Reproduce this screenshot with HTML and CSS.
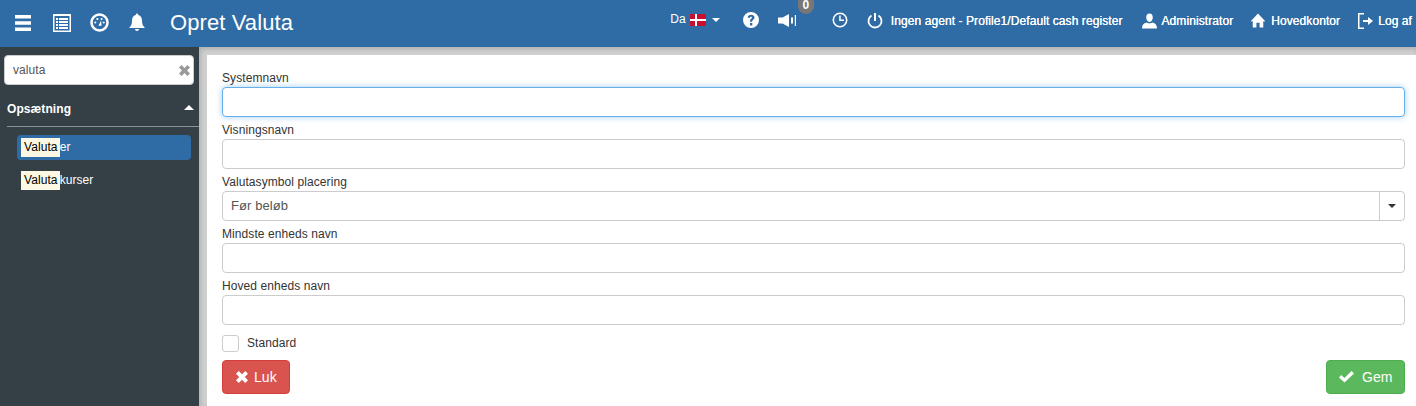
FILE: index.html
```html
<!DOCTYPE html>
<html lang="da">
<head>
<meta charset="utf-8">
<title>Opret Valuta</title>
<link rel="stylesheet" href="styles.css">
</head>
<body>
<header class="topbar">
  <div class="tools">
    <svg class="ic menu" viewBox="0 0 16 16"><path d="M0 0h16v3.500H0zM0 6.200h16v3.500H0zM0 12.500h16V16H0z"/></svg>
    <svg class="ic list" viewBox="0 0 18 18"><path fill-rule="evenodd" d="M0 0h18v18H0zM1.500 2v14.500h15V2z"/><path d="M3 4h2v2H3zM6 4h9v2H6zM3 7h2v2H3zM6 7h9v2H6zM3 10h2v2H3zM6 10h9v2H6zM3 13h2v2H3zM6 13h9v2H6z"/></svg>
    <svg class="ic gauge" viewBox="0 0 18 18"><circle cx="9" cy="9" r="7.600" fill="none" stroke="#fff" stroke-width="2.400"/><circle cx="5" cy="9" r="1"/><circle cx="7" cy="5.800" r="1"/><circle cx="13" cy="9" r="1"/><circle cx="11" cy="5.800" r="1"/><path d="M8 12l2.500-5 .5 5z"/></svg>
    <svg class="ic bell" viewBox="0 0 16 18"><path d="M8 0c.7 0 1 .5 1 1.200C12 2 13 4.500 13 7c0 4 1 5.500 3 7.500H0C2 12.500 3 11 3 7c0-2.500 1-5 4-5.800C7 .5 7.300 0 8 0zM6 15.500h4c0 1.200-1 2-2 2s-2-.8-2-2z"/></svg>
    <h1 class="title">Opret Valuta</h1>
  </div>
  <nav class="status">
    <span class="lang">Da
      <svg class="flag" viewBox="0 0 16 12"><rect width="16" height="12" fill="#c8102e"/><path d="M5 0h2v12H5zM0 5h16v2H0z" fill="#fff"/></svg>
      <i class="caret"></i>
    </span>
    <svg class="ic help" viewBox="0 0 16 16"><path fill-rule="evenodd" d="M8 0a8 8 0 1 1 0 16A8 8 0 0 1 8 0zM7 11v2.500h2.300V11zM8.100 2.800c-2 0-3.200 1-3.500 2.700l2.200.4c.1-.8.500-1.200 1.200-1.200.6 0 1 .4 1 .9 0 1.200-2.100 1.300-2.100 3.700v.4h2.300c-.1-2 2.300-1.900 2.300-4.200 0-1.700-1.400-2.700-3.400-2.700z"/></svg>
    <span class="sound">
      <svg class="ic speaker" viewBox="0 0 19 13"><path d="M0 3.500h4.500L11 0v13L4.500 9.500H0zM13 3.500h2v6h-2zM16.800 1H18v11h-1.200z"/></svg>
      <b class="badge">0</b>
    </span>
    <svg class="ic clock" viewBox="0 0 16 16"><circle cx="8" cy="8" r="6.700" fill="none" stroke="#fff" stroke-width="1.600"/><path d="M7.200 3.500h1.500v4h3.300V9H7.200z"/></svg>
    <span class="item agent"><svg class="ic power" viewBox="0 0 16 16"><path d="M7 0h2v8H7z"/><path d="M4.500 2.500a6.500 6.500 0 1 0 7 0" fill="none" stroke="#fff" stroke-width="1.800"/></svg>Ingen agent - Profile1/Default cash register</span>
    <span class="item"><svg class="ic user" viewBox="0 0 16 16"><path d="M8 0c2.200 0 3.500 1.700 3.500 4S10.200 9 8 9 4.500 6.300 4.500 4 5.800 0 8 0zM0 16c0-3.500 1.500-5.800 5-6.500 1.800 1.200 4.200 1.200 6 0 3.500.7 5 3 5 6.500z"/></svg>Administrator</span>
    <span class="item"><svg class="ic home" viewBox="0 0 16 16"><path d="M8 0l8 8.500-1 1-1-1V16H9.800v-5.500H6.200V16H2V8.500l-1 1-1-1z"/></svg>Hovedkontor</span>
    <span class="item"><svg class="ic logout" viewBox="0 0 15 16"><path d="M6 0H0v16h6v-1.500H1.500v-13H6z"/><path d="M5 7h5V4l5 4-5 4V9H5z"/></svg>Log af</span>
  </nav>
</header>
<div class="shell">
  <aside class="side">
    <div class="search">
      <span class="search-text">valuta</span>
      <svg class="clear" viewBox="0 0 12 12"><path d="M2.800 0L6 3.200 9.200 0 12 2.800 8.800 6 12 9.200 9.200 12 6 8.800 2.800 12 0 9.200 3.200 6 0 2.800z"/></svg>
    </div>
    <div class="group"><span>Opsætning</span><i class="caret-up"></i></div>
    <ul class="links">
      <li class="link active"><mark>Valuta</mark>er</li>
      <li class="link"><mark>Valuta</mark>kurser</li>
    </ul>
  </aside>
  <main class="page">
    <form class="panel">
      <label class="lbl">Systemnavn</label>
      <div class="field focus"></div>
      <label class="lbl">Visningsnavn</label>
      <div class="field"></div>
      <label class="lbl">Valutasymbol placering</label>
      <div class="select"><span class="val">Før beløb</span><span class="arrow"><i class="caret dark"></i></span></div>
      <label class="lbl">Mindste enheds navn</label>
      <div class="field"></div>
      <label class="lbl">Hoved enheds navn</label>
      <div class="field"></div>
      <div class="check"><span class="box"></span><span>Standard</span></div>
      <div class="actions">
        <span class="btn red"><svg class="bi" viewBox="0 0 12 12"><path d="M2.800 0L6 3.200 9.200 0 12 2.800 8.800 6 12 9.200 9.200 12 6 8.800 2.800 12 0 9.200 3.200 6 0 2.800z"/></svg>Luk</span>
        <span class="btn green"><svg class="bi ok" viewBox="0 0 15 12"><path d="M5.500 11.500L0 6.500 2.200 4l3.300 3L12.500 0 15 2.500z"/></svg>Gem</span>
      </div>
    </form>
  </main>
</div>
</body>
</html>
```
FILE: styles.css
```css
* { box-sizing: border-box; }
html, body { margin: 0; height: 100%; overflow: hidden; }
body { font: 12px/1.43 "Liberation Sans", Arial, sans-serif; letter-spacing: .08px; color: #333; background: #d0d0d0; width: 1416px; height: 406px; }

.topbar { height: 47px; background: #2f6ca5; color: #fff; display: flex; justify-content: space-between; align-items: center; }
.tools { display: flex; align-items: center; padding: 0 0 2px 15px; }
.ic { fill: #fff; display: block; flex: none; }
.menu { width: 16px; height: 16px; margin-right: 22px; }
.list { width: 18px; height: 18px; margin-right: 19px; }
.gauge { width: 19px; height: 19px; margin-right: 20px; }
.bell { width: 16px; height: 19px; margin-right: 25px; }
.title { margin: 0; font-size: 22px; font-weight: 400; line-height: 30px; letter-spacing: .1px; }
.status { display: flex; align-items: center; padding: 0 4px 4px 0; }
.lang { display: flex; align-items: center; gap: 4px; margin: 0 23px 3px 0; }
.flag { width: 16px; height: 12px; }
.caret { display: inline-block; width: 0; height: 0; margin-left: 2px; border: 4px solid transparent; border-top-color: #fff; border-bottom: 0; }
.caret.dark { border-top-color: #333; margin: 0; }
.help { width: 16px; height: 16px; margin: 0 19px 3px 0; }
.sound { position: relative; margin: 0 35px 3px 0; }
.speaker { width: 19px; height: 13px; }
.badge { position: absolute; left: 20px; top: -20px; width: 16px; height: 20px; padding-top: 7px; border-radius: 8px; background: #777; font-size: 12px; font-weight: 700; line-height: 9px; text-align: center; }
.clock { width: 16px; height: 16px; margin: 0 19px 3px 0; }
.item { display: flex; align-items: center; margin-right: 18px; text-shadow: 0 0 0 #fff; }
.item:last-child { margin-right: 0; }
.item .ic { margin-bottom: 2px; }
.item.agent { margin-right: 19px; }
.power { width: 16px; height: 16px; margin-right: 8px; }
.item .user { width: 15px; height: 16px; margin-right: 5px; }
.item .home { width: 14px; height: 15px; margin-right: 6px; }
.item .logout { width: 15px; height: 16px; margin-right: 5px; }

.shell { display: flex; height: 359px; }
.side { width: 199px; background: #343f46; flex: none; padding-top: 8px; }
.search { height: 30px; width: 190px; margin-left: 4px; background: #fff; border: 1px solid #ccc; border-radius: 4px; display: flex; align-items: center; justify-content: space-between; padding: 2px 3px 0 8px; color: #555; }
.clear { width: 11px; height: 11px; fill: #999; margin-top: -2px; }
.group { margin: 10px 0 0 7px; height: 32px; display: flex; align-items: center; justify-content: space-between; padding: 0 5px 1px 0; border-bottom: 1px solid #8c9398; color: #fff; font-weight: 700; }
.caret-up { width: 0; height: 0; border: 5px solid transparent; border-bottom-color: #fff; border-top: 0; margin-top: -5px; }
.links { list-style: none; margin: 8px 0 0 17px; padding: 0; width: 174px; color: #fff; }
.link { height: 25px; line-height: 24px; padding-left: 4px; border-radius: 4px; margin-bottom: 8px; }
.link.active { background: #2f6ca5; }
mark { display: inline-block; height: 19px; line-height: 19px; padding: 0 2px 0 3px; background: #fcf8e3; color: #000; }

.page { flex: 1; padding: 8px 0 0 8px; box-shadow: inset 0 3px 4px rgba(0, 0, 0, .1), inset 3px 0 4px rgba(0, 0, 0, .08); }
.panel { height: 351px; background: #fff; padding: 15px 11px 0 15px; display: flex; flex-direction: column; }
.lbl { height: 17px; line-height: 17px; color: #333; }
.field, .select { height: 30px; border: 1px solid #ccc; border-radius: 4px; background: #fff; margin-bottom: 5px; }
.focus { border-color: #66afe9; box-shadow: 0 0 6px rgba(102, 175, 233, .6); }
.select { display: flex; justify-content: space-between; align-items: center; color: #555; font-size: 13px; }
.val { padding-left: 8px; }
.arrow { width: 25px; height: 28px; border-left: 1px solid #ccc; display: flex; align-items: center; justify-content: center; }
.check { display: flex; align-items: center; gap: 8px; height: 17px; margin-top: 5px; }
.box { width: 17px; height: 17px; border: 1px solid #ccc; border-radius: 3px; background: #fff; }
.actions { display: flex; justify-content: space-between; margin-top: 8px; }
.btn { height: 34px; display: flex; align-items: center; border-radius: 4px; color: #fff; font-size: 14px; }
.btn.red { background: #d9534f; border: 1px solid #d43f3a; width: 68px; gap: 6px; padding-left: 13px; }
.btn.green { background: #5cb85c; border: 1px solid #4cae4c; width: 79px; gap: 8px; padding-left: 12px; }
.bi { width: 12px; height: 12px; fill: #fff; flex: none; }
.bi.ok { width: 15px; height: 12px; }
```
